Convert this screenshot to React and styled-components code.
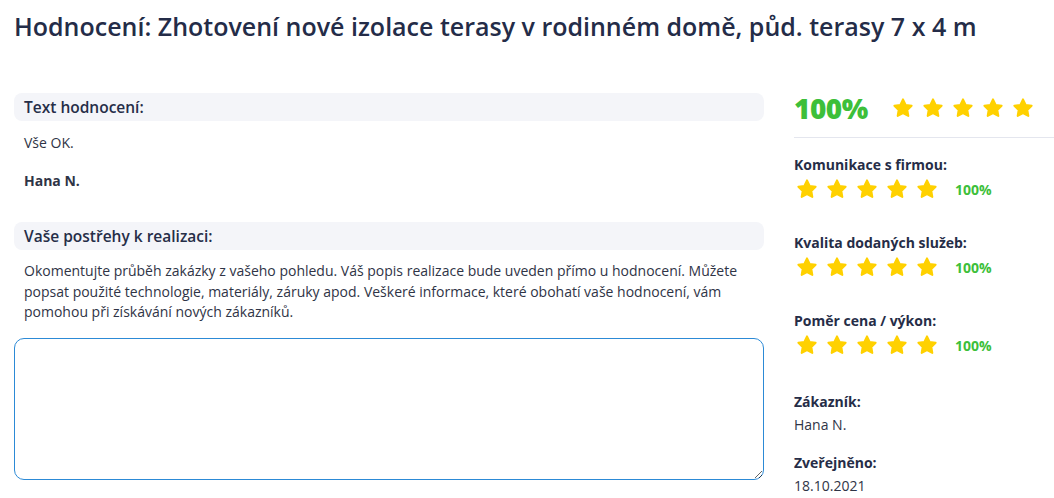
import React from 'react';
import styled, { createGlobalStyle } from 'styled-components';

const GlobalStyle = createGlobalStyle`
  body {
    margin: 0;
    background: #fff;
    font-family: "Open Sans", "Noto Sans", sans-serif;
    color: #2b3349;
  }
`;

const Page = styled.div`
  padding: 10px 0 0 14px;
  width: 1040px;
  overflow: hidden;
`;

const Title = styled.h1`
  margin: 0;
  font-size: 25px;
  line-height: 32px;
  font-weight: 600;
  color: #242c48;
  white-space: nowrap;
`;

const Columns = styled.div`
  display: grid;
  grid-template-columns: 750px 1fr;
  gap: 30px;
  margin-top: 51px;
`;

const Main = styled.div`
  display: flex;
  flex-direction: column;
`;

const SectionHead = styled.div`
  height: 28px;
  display: flex;
  align-items: center;
  padding: 0 10px;
  background: #f4f5f9;
  border-radius: 8px;
  font-size: 15.5px;
  font-weight: 600;
  color: #262e48;
  margin-top: ${p => p.$top || 0}px;
`;

const Text = styled.p`
  margin: ${p => p.$top || 0}px 0 0;
  padding: 0 10px;
  font-size: 14px;
  line-height: 20.5px;
  font-weight: ${p => (p.$bold ? 700 : 400)};
  color: #2f3446;
`;

const Area = styled.textarea`
  margin-top: 15px;
  height: 142px;
  box-sizing: border-box;
  width: 100%;
  border: 1px solid #2c8ad6;
  border-radius: 10px;
  outline: none;
  font-family: inherit;
  display: block;
`;

const Side = styled.div`
  display: flex;
  flex-direction: column;
`;

const Summary = styled.div`
  display: flex;
  align-items: center;
  height: 30px;
  padding-bottom: 14px;
  border-bottom: 1px solid #e4e6ee;
`;

const BigScore = styled.span`
  font-size: 28px;
  font-weight: 800;
  color: #3dbf3a;
  letter-spacing: -0.5px;
  margin-right: 24px;
`;

const Stars = styled.div`
  display: flex;
  gap: 8px;
  margin-left: ${p => p.$shift || 0}px;
`;

const Criterion = styled.div`
  margin-top: ${p => p.$top}px;
`;

const Label = styled.div`
  font-size: 14px;
  line-height: 20px;
  font-weight: 700;
  color: #262d47;
`;

const Value = styled.div`
  font-size: 14px;
  line-height: 20px;
  margin-top: 3px;
  color: #2f3446;
`;

const RateRow = styled.div`
  display: flex;
  align-items: center;
  margin-top: 3px;
`;

const SmallScore = styled.span`
  font-size: 14px;
  font-weight: 700;
  color: #3dbf3a;
  margin-left: 17px;
`;

const Star = () => (
  <svg width="22" height="22" viewBox="0 0 24 24">
    <polygon
      points="12,2.6 14.9,8.6 21.4,9.5 16.7,14.1 17.8,20.6 12,17.5 6.2,20.6 7.3,14.1 2.6,9.5 9.1,8.6"
      fill="#ffd100"
      stroke="#ffd100"
      strokeWidth="2.2"
      strokeLinejoin="round"
    />
  </svg>
);

const FiveStars = ({ shift }) => (
  <Stars $shift={shift}>
    {[0, 1, 2, 3, 4].map(i => <Star key={i} />)}
  </Stars>
);

const criteria = [
  { label: 'Komunikace s firmou:', top: 17 },
  { label: 'Kvalita dodaných služeb:', top: 33 },
  { label: 'Poměr cena / výkon:', top: 33 },
];

export default function App() {
  return (
    <Page>
      <GlobalStyle />
      <Title>Hodnocení: Zhotovení nové izolace terasy v rodinném domě, půd. terasy 7 x 4 m</Title>
      <Columns>
        <Main>
          <SectionHead>Text hodnocení:</SectionHead>
          <Text $top={12}>Vše OK.</Text>
          <Text $top={17} $bold>Hana N.</Text>
          <SectionHead $top={31}>Vaše postřehy k realizaci:</SectionHead>
          <Text $top={11}>
            Okomentujte průběh zakázky z vašeho pohledu. Váš popis realizace bude uveden přímo u hodnocení. Můžete
            popsat použité technologie, materiály, záruky apod. Veškeré informace, které obohatí vaše hodnocení, vám
            pomohou při získávání nových zákazníků.
          </Text>
          <Area />
        </Main>
        <Side>
          <Summary>
            <BigScore>100%</BigScore>
            <FiveStars />
          </Summary>
          {criteria.map(c => (
            <Criterion key={c.label} $top={c.top}>
              <Label>{c.label}</Label>
              <RateRow>
                <FiveStars shift={2} />
                <SmallScore>100%</SmallScore>
              </RateRow>
            </Criterion>
          ))}
          <Criterion $top={36}>
            <Label>Zákazník:</Label>
            <Value>Hana N.</Value>
          </Criterion>
          <Criterion $top={18}>
            <Label>Zveřejněno:</Label>
            <Value>18.10.2021</Value>
          </Criterion>
        </Side>
      </Columns>
    </Page>
  );
}
